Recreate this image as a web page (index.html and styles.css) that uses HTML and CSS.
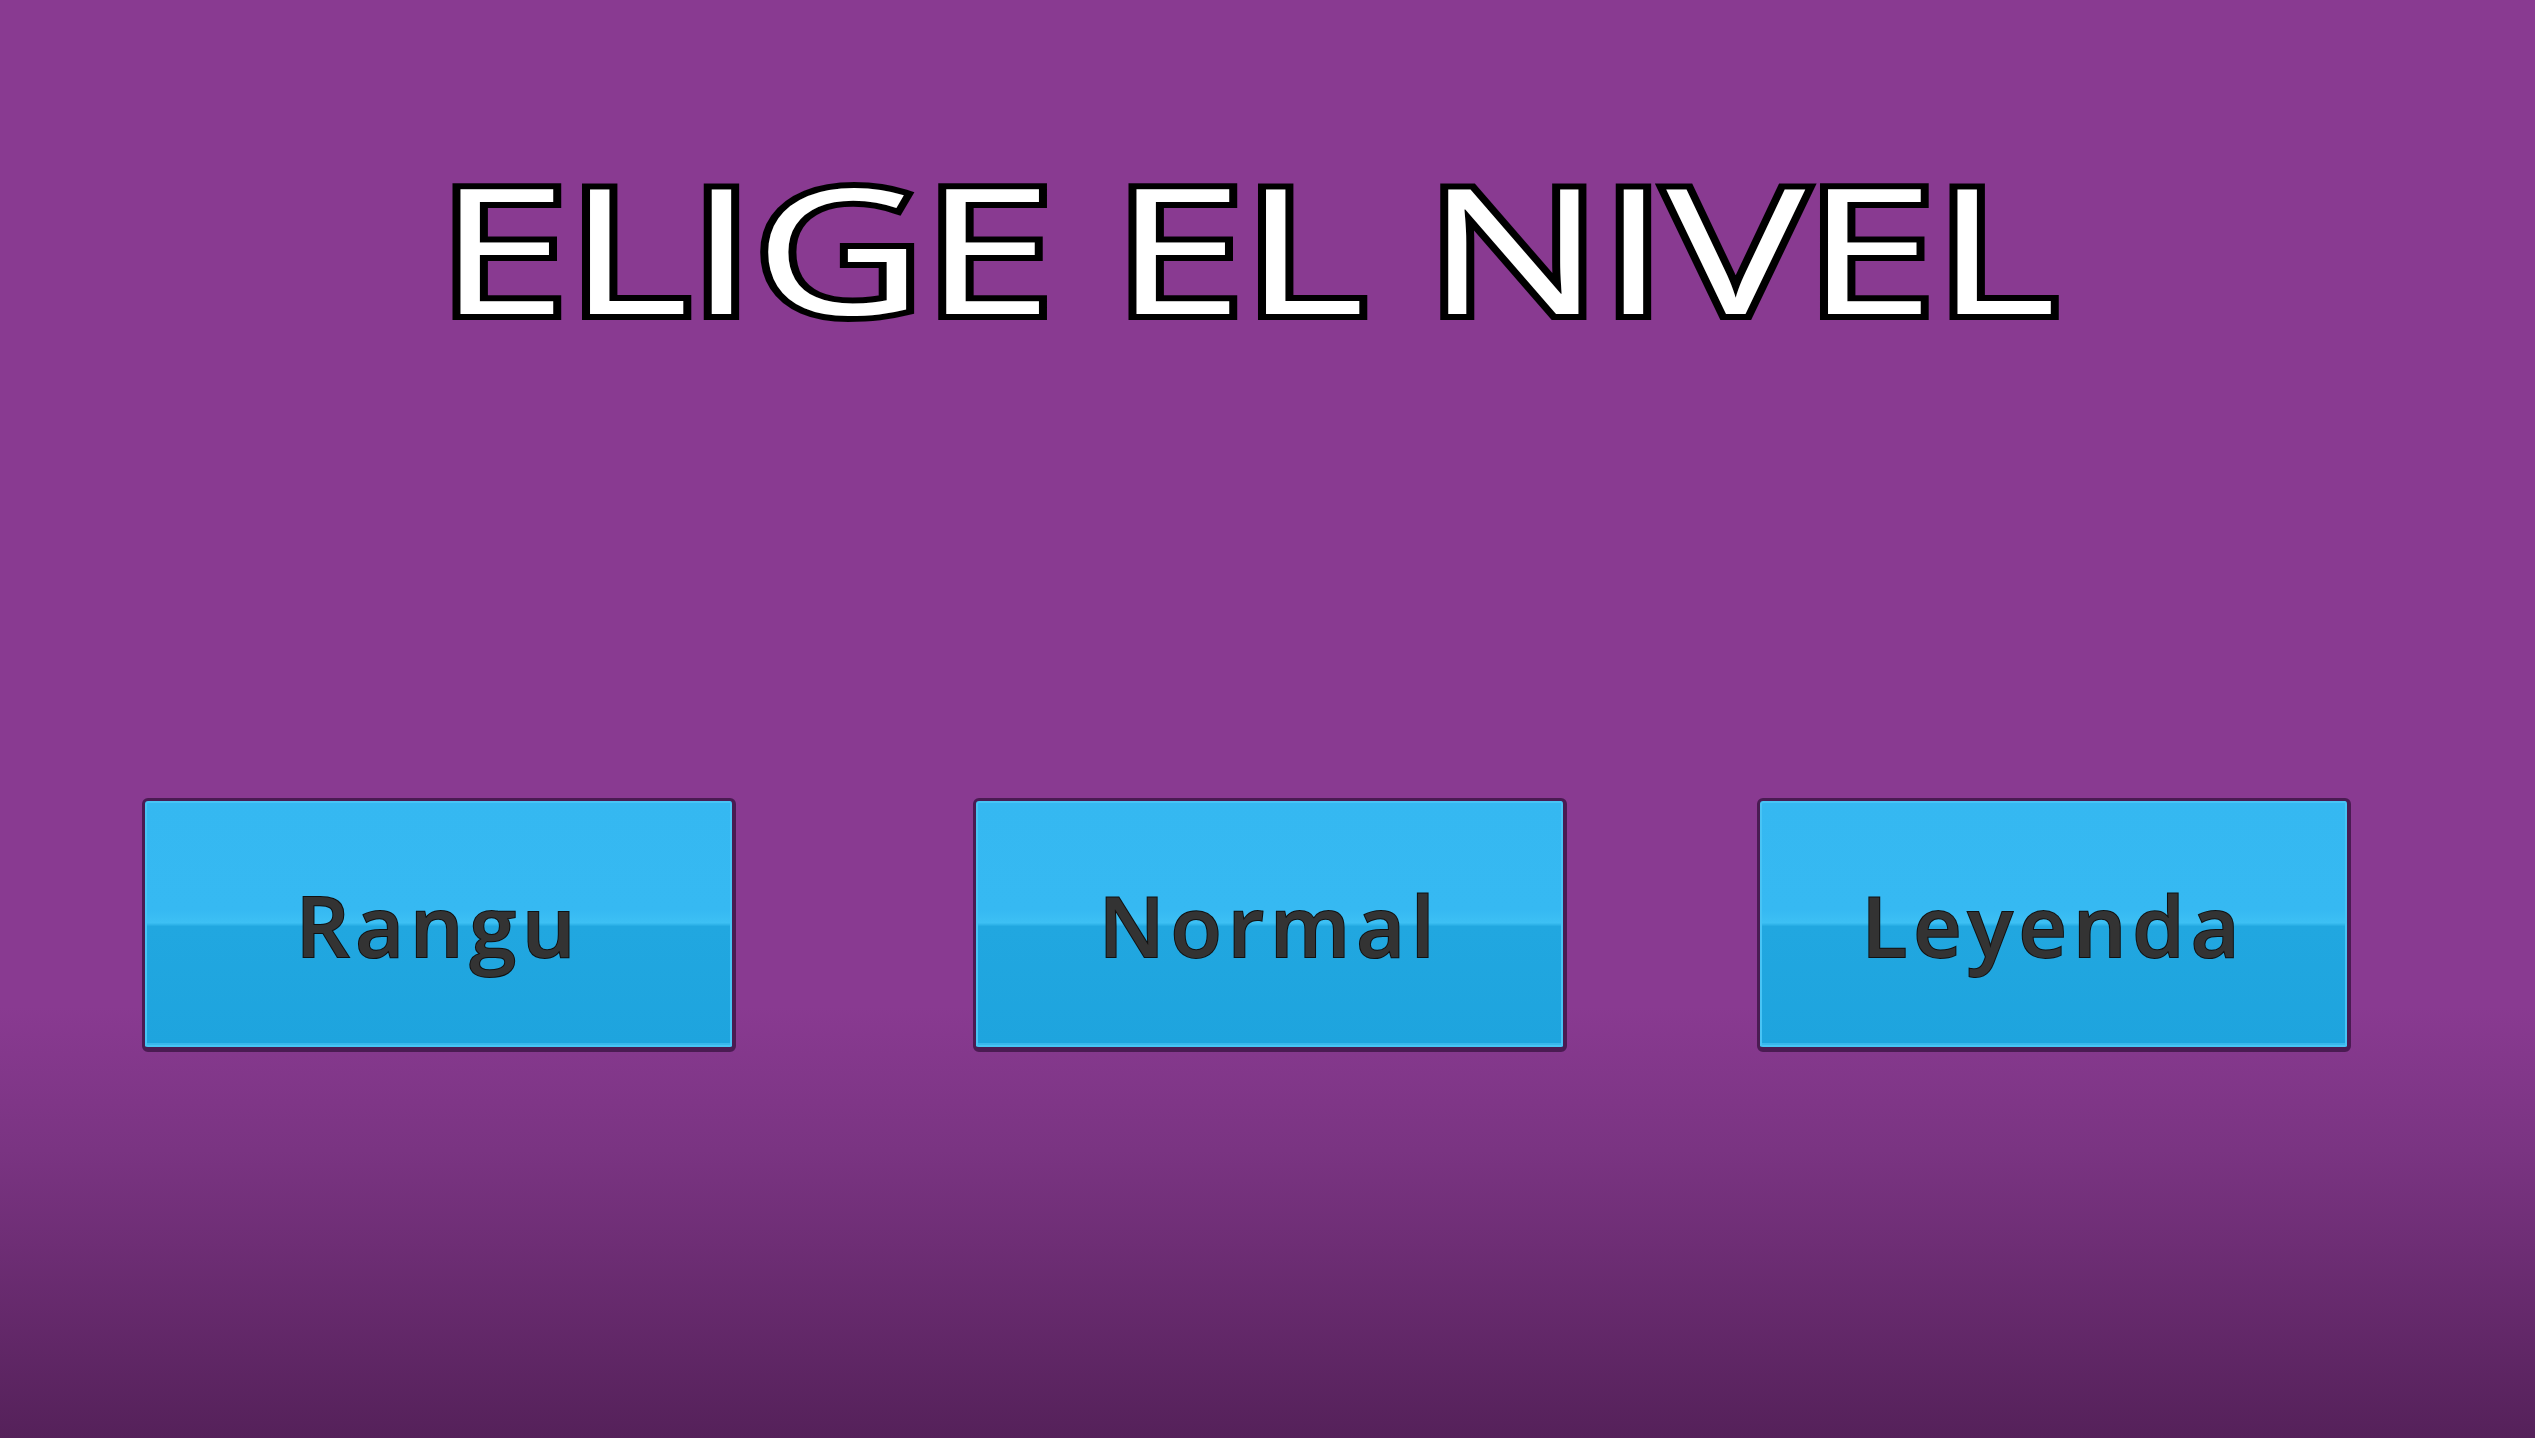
FILE: index.html
```html
<!DOCTYPE html>
<html lang="es">
<head>
    <meta charset="UTF-8">
    <meta name="viewport" content="width=device-width, initial-scale=1.0">
    <title>Elige el nivel</title>
    <link rel="stylesheet" href="styles.css">
</head>
<body>
    <main class="menu">
        <h1 class="menu-title"><span>ELIGE EL NIVEL</span></h1>
        <div class="levels">
            <button class="level-btn">Rangu</button>
            <button class="level-btn">Normal</button>
            <button class="level-btn">Leyenda</button>
        </div>
    </main>
</body>
</html>
```

FILE: styles.css
```css
html, body {
    height: 100%;
}

body {
    margin: 0;
    font-family: "Open Sans", "Noto Sans", sans-serif;
    background: linear-gradient(to bottom, #893a91 0%, #893a91 70%, #7a3482 80%, #55215a 100%);
    overflow: hidden;
}

.menu {
    display: flex;
    flex-direction: column;
    padding-top: 160px;
}

.menu-title {
    margin: 0;
    text-align: center;
    padding-right: 40px;
    font-size: 174px;
    font-weight: 500;
    line-height: 1;
}

.menu-title span {
    display: inline-block;
    color: #fff;
    -webkit-text-stroke: 12px #000;
    paint-order: stroke fill;
    transform: scaleX(1.34);
}

.levels {
    display: flex;
    margin-top: 464px;
    padding-left: 142px;
    gap: 190px;
}

.level-btn:first-child {
    margin-right: 47px;
}

.level-btn {
    width: 594px;
    height: 254px;
    padding: 0;
    border: 3px solid #4a1b52;
    border-bottom-width: 5px;
    border-right-width: 4px;
    border-radius: 6px;
    background: linear-gradient(to bottom, #35b8f1 0%, #36b9f2 44%, #3dc0f4 49.5%, #21a7e0 51%, #1ea4de 100%);
    box-shadow: inset 0 0 0 2px #48c4f5, inset 0 -3px 0 1px #3ab7ec;
    font-family: "Open Sans", "Noto Sans", sans-serif;
    font-size: 84px;
    font-weight: 600;
    letter-spacing: 6px;
    color: #333;
    -webkit-text-stroke: 2px #111;
    paint-order: stroke fill;
    cursor: pointer;
}

.level-btn:hover {
    filter: brightness(1.08);
}
```
